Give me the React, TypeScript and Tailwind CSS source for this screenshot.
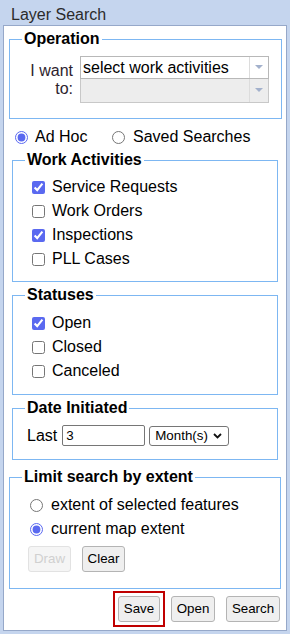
import React from "react";

const activities = [
  { name: "Service Requests", checked: true },
  { name: "Work Orders", checked: false },
  { name: "Inspections", checked: true },
  { name: "PLL Cases", checked: false },
];

const statuses = [
  { name: "Open", checked: true },
  { name: "Closed", checked: false },
  { name: "Canceled", checked: false },
];

function Arrow() {
  return (
    <svg width="8" height="5" viewBox="0 0 8 5">
      <path d="M0 0 L8 0 L4 4 Z" fill="#a3b1cc" />
    </svg>
  );
}

function Check({ label, checked }: { label: string; checked: boolean }) {
  return (
    <label className="flex items-center h-[24px]">
      <input
        type="checkbox"
        defaultChecked={checked}
        className="w-[13px] h-[13px] accent-[#5a69f0]"
      />
      <span className="ml-[7px]">{label}</span>
    </label>
  );
}

function Btn({ label, w, disabled }: { label: string; w: string; disabled?: boolean }) {
  return (
    <button
      className={`h-[26px] ${w} text-[13.33px] rounded-[3px] border ${
        disabled
          ? "bg-[#f5f5f5] border-[#e2e2e2] text-[#d0d0d0]"
          : "bg-[#efefef] border-[#b4b4b4] text-black"
      }`}
    >
      {label}
    </button>
  );
}

export default function App() {
  return (
    <div className="w-[290px] h-[634px] overflow-hidden bg-[#c5d5ee] font-['Liberation_Sans',Arial,sans-serif] text-[16px] leading-[18px] text-black">
      <div className="h-[25px] pl-[11px] pt-[6px] text-[#2b2b2b]">Layer Search</div>

      <div className="ml-[3px] w-[284px] h-[606px] border border-[#96a8c9] bg-white">
        {/* Operation */}
        <fieldset className="mt-[4px] ml-[5px] w-[273px] border border-[#7db7f2] px-3 pt-[8px] pb-[15px]">
          <legend className="px-0.5 font-bold leading-[18px]">Operation</legend>
          <div className="flex items-center">
            <div className="w-[51px] mr-[7px] text-right text-[#2e1e2e]">I want to:</div>
            <div className="flex-1 flex flex-col">
              <div className="flex h-[23px] border border-[#b8b8b8] bg-white">
                <div className="flex-1 pl-[2px] flex items-center">select work activities</div>
                <div className="w-[19px] border-l border-[#dcdcdc] flex items-center justify-center">
                  <Arrow />
                </div>
              </div>
              <div className="flex h-[24px] border border-t-0 border-[#c8c8c8] bg-[#ededed]">
                <div className="flex-1" />
                <div className="w-[19px] border-l border-[#dcdcdc] flex items-center justify-center">
                  <Arrow />
                </div>
              </div>
            </div>
          </div>
        </fieldset>

        {/* Mode */}
        <div className="mt-[9px] h-[18px] flex items-center">
          <label className="ml-[11px] w-[97px] flex items-center">
            <input type="radio" name="mode" defaultChecked className="w-[13px] h-[13px] accent-[#5a69f0]" />
            <span className="ml-[7px]">Ad Hoc</span>
          </label>
          <label className="flex items-center">
            <input type="radio" name="mode" className="w-[13px] h-[13px] accent-[#5a69f0]" />
            <span className="ml-[8px]">Saved Searches</span>
          </label>
        </div>

        {/* Work Activities */}
        <fieldset className="mt-[5px] ml-[8px] w-[266px] border border-[#7db7f2] px-3 pt-[6px] pb-[10px]">
          <legend className="px-0.5 font-bold leading-[18px]">Work Activities</legend>
          <div className="pl-[7px]">
            {activities.map((a) => (
              <Check key={a.name} label={a.name} checked={a.checked} />
            ))}
          </div>
        </fieldset>

        {/* Statuses */}
        <fieldset className="mt-[4px] ml-[8px] w-[266px] border border-[#7db7f2] px-3 pt-[7px] pb-[11px]">
          <legend className="px-0.5 font-bold leading-[18px]">Statuses</legend>
          <div className="pl-[7px]">
            {statuses.map((s) => (
              <Check key={s.name} label={s.name} checked={s.checked} />
            ))}
          </div>
        </fieldset>

        {/* Date Initiated */}
        <fieldset className="mt-[4px] ml-[8px] w-[266px] border border-[#7db7f2] px-3 pt-[8px] pb-[13px]">
          <legend className="px-0.5 font-bold leading-[18px]">Date Initiated</legend>
          <div className="flex items-center h-[21px] pl-[2px]">
            <span>Last</span>
            <div className="ml-[5px] w-[83px] h-[21px] border border-[#767676] rounded-[2px] pl-[3px] text-[13.33px] flex items-center">
              3
            </div>
            <div className="ml-[4px] w-[80px] h-[20px] border border-[#767676] rounded-[3px] pl-[5px] pr-[6px] text-[13.33px] flex items-center justify-between">
              <span>Month(s)</span>
              <svg width="9" height="6" viewBox="0 0 9 6">
                <path d="M1 1 L4.5 4.5 L8 1" fill="none" stroke="#111" strokeWidth="1.8" />
              </svg>
            </div>
          </div>
        </fieldset>

        {/* Limit search by extent */}
        <fieldset className="mt-[8px] ml-[5px] w-[272px] border border-[#7db7f2] px-3 pt-[7px] pb-[16px]">
          <legend className="px-0.5 font-bold leading-[18px]">Limit search by extent</legend>
          <div className="pl-[8px]">
            <label className="flex items-center h-[24px]">
              <input type="radio" name="extent" className="w-[13px] h-[13px] accent-[#5a69f0]" />
              <span className="ml-[8px]">extent of selected features</span>
            </label>
            <label className="flex items-center h-[24px]">
              <input type="radio" name="extent" defaultChecked className="w-[13px] h-[13px] accent-[#5a69f0]" />
              <span className="ml-[8px]">current map extent</span>
            </label>
          </div>
          <div className="mt-[5px] ml-[6px] flex gap-[11px]">
            <Btn label="Draw" w="w-[43px]" disabled />
            <Btn label="Clear" w="w-[43px]" />
          </div>
        </fieldset>

        {/* Actions */}
        <div className="mt-[2px] pr-[6px] flex items-center justify-end">
          <div className="border-2 border-[#c00000] p-[3px]">
            <Btn label="Save" w="w-[42px]" />
          </div>
          <div className="ml-[6px]">
            <Btn label="Open" w="w-[44px]" />
          </div>
          <div className="ml-[11px]">
            <Btn label="Search" w="w-[54px]" />
          </div>
        </div>
      </div>
    </div>
  );
}
